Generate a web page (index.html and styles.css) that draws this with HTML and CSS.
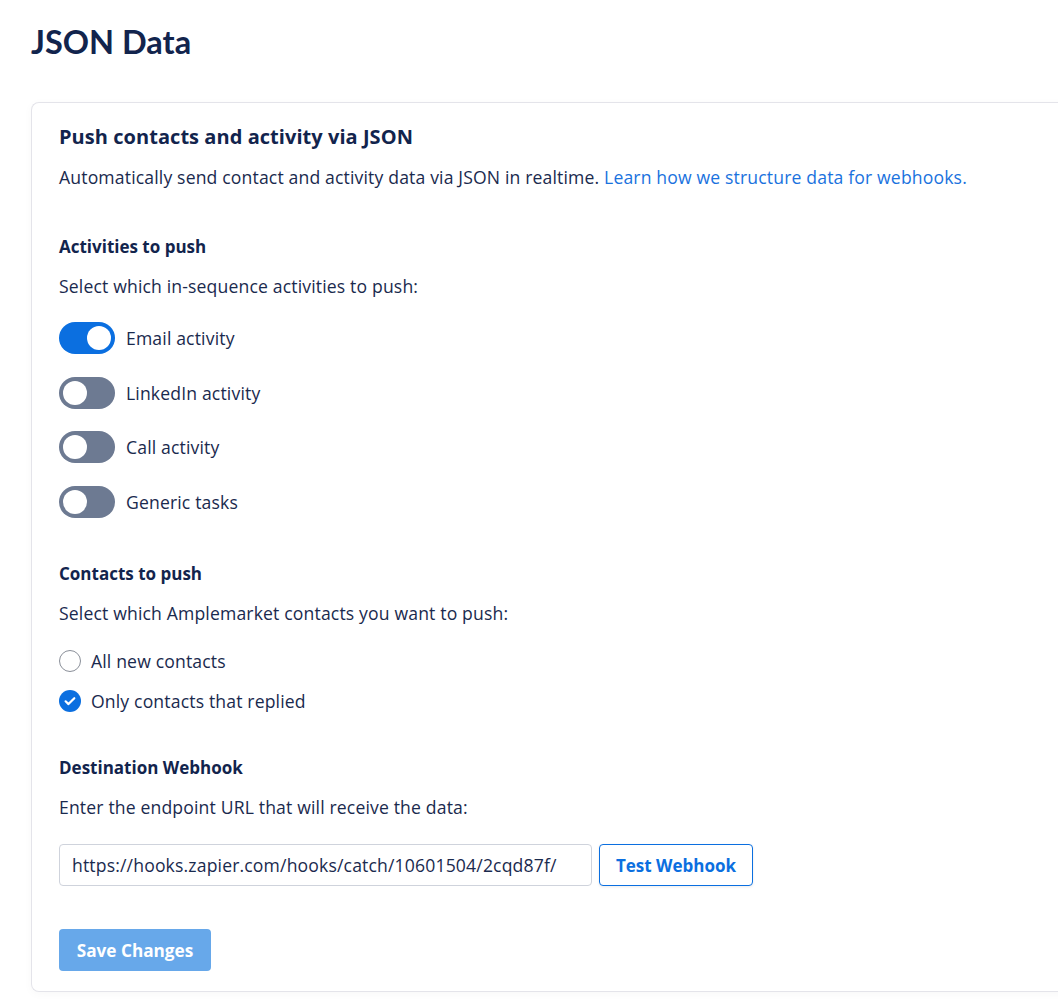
FILE: index.html
```html
<!DOCTYPE html>
<html>
<head>
<meta charset="utf-8">
<link rel="stylesheet" href="styles.css">
</head>
<body>
<div class="page">
  <h1 class="page-title">JSON Data</h1>
  <div class="card">
    <h2 class="card-title">Push contacts and activity via JSON</h2>
    <p class="desc">Automatically send contact and activity data via JSON in realtime. <a class="link" href="#">Learn how we structure data for webhooks.</a></p>

    <h3 class="section-title">Activities to push</h3>
    <p class="hint">Select which in-sequence activities to push:</p>
    <div class="toggles">
      <label class="toggle-row"><span class="toggle on"><span class="knob"></span></span><span>Email activity</span></label>
      <label class="toggle-row"><span class="toggle"><span class="knob"></span></span><span>LinkedIn activity</span></label>
      <label class="toggle-row"><span class="toggle"><span class="knob"></span></span><span>Call activity</span></label>
      <label class="toggle-row"><span class="toggle"><span class="knob"></span></span><span>Generic tasks</span></label>
    </div>

    <h3 class="section-title">Contacts to push</h3>
    <p class="hint">Select which Amplemarket contacts you want to push:</p>
    <div class="radios">
      <label class="radio-row"><span class="radio"></span><span>All new contacts</span></label>
      <label class="radio-row"><span class="radio checked"><svg viewBox="0 0 22 22" width="22" height="22"><circle cx="11" cy="11" r="11" fill="#0b6fe0"/><path d="M6.6 11.3 L9.5 14.1 L15.3 8.2" fill="none" stroke="#fff" stroke-width="2.2" stroke-linecap="round" stroke-linejoin="round"/></svg></span><span>Only contacts that replied</span></label>
    </div>

    <h3 class="section-title">Destination Webhook</h3>
    <p class="hint">Enter the endpoint URL that will receive the data:</p>
    <div class="webhook-row">
      <div class="input">https://hooks.zapier.com/hooks/catch/10601504/2cqd87f/</div>
      <button class="btn-outline">Test Webhook</button>
    </div>

    <button class="btn-save">Save Changes</button>
  </div>
</div>
</body>
</html>
```

FILE: styles.css
```css
* { box-sizing: border-box; }
html, body { margin: 0; padding: 0; background: #ffffff; }
body {
  font-family: "Open Sans", "Noto Sans", sans-serif;
  color: #1a2a4e;
  font-size: 17.6px;
  letter-spacing: 0.15px;
}
.page {
  padding: 22px 0 0 31px;
  overflow: hidden;
  height: 1008px;
}
.page-title {
  margin: 0;
  font-family: "Lato", "Open Sans", sans-serif;
  font-size: 32.5px;
  line-height: 40px;
  font-weight: 700;
  letter-spacing: 0;
  color: #12244d;
}
.card {
  margin-top: 40px;
  width: 1060px;
  border: 1px solid #e4e4ea;
  border-right: none;
  border-radius: 8px 0 0 8px;
  padding: 20px 27px 20px 27px;
  background: #fff;
  box-shadow: 0 2px 10px rgba(0,0,0,0.03);
}
.card-title {
  margin: 0;
  font-size: 20px;
  line-height: 28px;
  font-weight: 700;
  letter-spacing: 0.05px;
  color: #12244d;
}
.desc {
  margin: 14px 0 0;
  line-height: 24px;
}
.link { color: #1a72de; text-decoration: none; }
.section-title {
  margin: 46px 0 0;
  font-size: 17px;
  line-height: 24px;
  font-weight: 700;
  letter-spacing: 0;
  color: #12244d;
}
.hint {
  margin: 15px 0 0;
  line-height: 24px;
}
.toggles {
  margin-top: 24px;
  display: flex;
  flex-direction: column;
  gap: 22.7px;
}
.toggles + .section-title { margin-top: 44px; }
.toggle-row {
  display: flex;
  align-items: center;
  gap: 11px;
  height: 32px;
}
.toggle {
  width: 56px;
  height: 32px;
  border-radius: 16px;
  background: #6d7a92;
  position: relative;
  flex: none;
}
.toggle .knob {
  position: absolute;
  top: 4px;
  left: 4px;
  width: 24px;
  height: 24px;
  border-radius: 50%;
  background: #fff;
}
.toggle.on { background: #0b6fe0; }
.toggle.on .knob { left: 28px; }
.radios {
  margin-top: 24px;
  display: flex;
  flex-direction: column;
  gap: 16px;
}
.radios + .section-title { margin-top: 43px; }
.radio-row {
  display: flex;
  align-items: center;
  gap: 10px;
  height: 24px;
}
.radio {
  width: 22px;
  height: 22px;
  border-radius: 50%;
  border: 1.5px solid #8a8f99;
  flex: none;
  display: block;
}
.radio.checked { border: none; }
.radio svg { display: block; }
.webhook-row {
  margin-top: 25px;
  display: flex;
  gap: 7px;
}
.input {
  width: 533px;
  height: 42px;
  border: 1px solid #cfd3dc;
  border-radius: 4px;
  padding: 0 12px;
  display: flex;
  align-items: center;
  font-size: 17.6px;
  color: #1a2a4e;
}
.btn-outline {
  height: 42px;
  width: 154px;
  border: 1px solid #0b6fe0;
  border-radius: 4px;
  background: #fff;
  color: #0b6fe0;
  font-family: inherit;
  font-size: 17px;
  font-weight: 700;
  letter-spacing: 0;
  box-shadow: 0 1px 3px rgba(0,0,0,0.08);
}
.btn-save {
  display: block;
  margin-top: 43px;
  height: 42px;
  width: 152px;
  border: none;
  border-radius: 4px;
  background: #67a8ea;
  color: #fff;
  font-family: inherit;
  font-size: 17.2px;
  font-weight: 700;
  letter-spacing: 0;
}
```
